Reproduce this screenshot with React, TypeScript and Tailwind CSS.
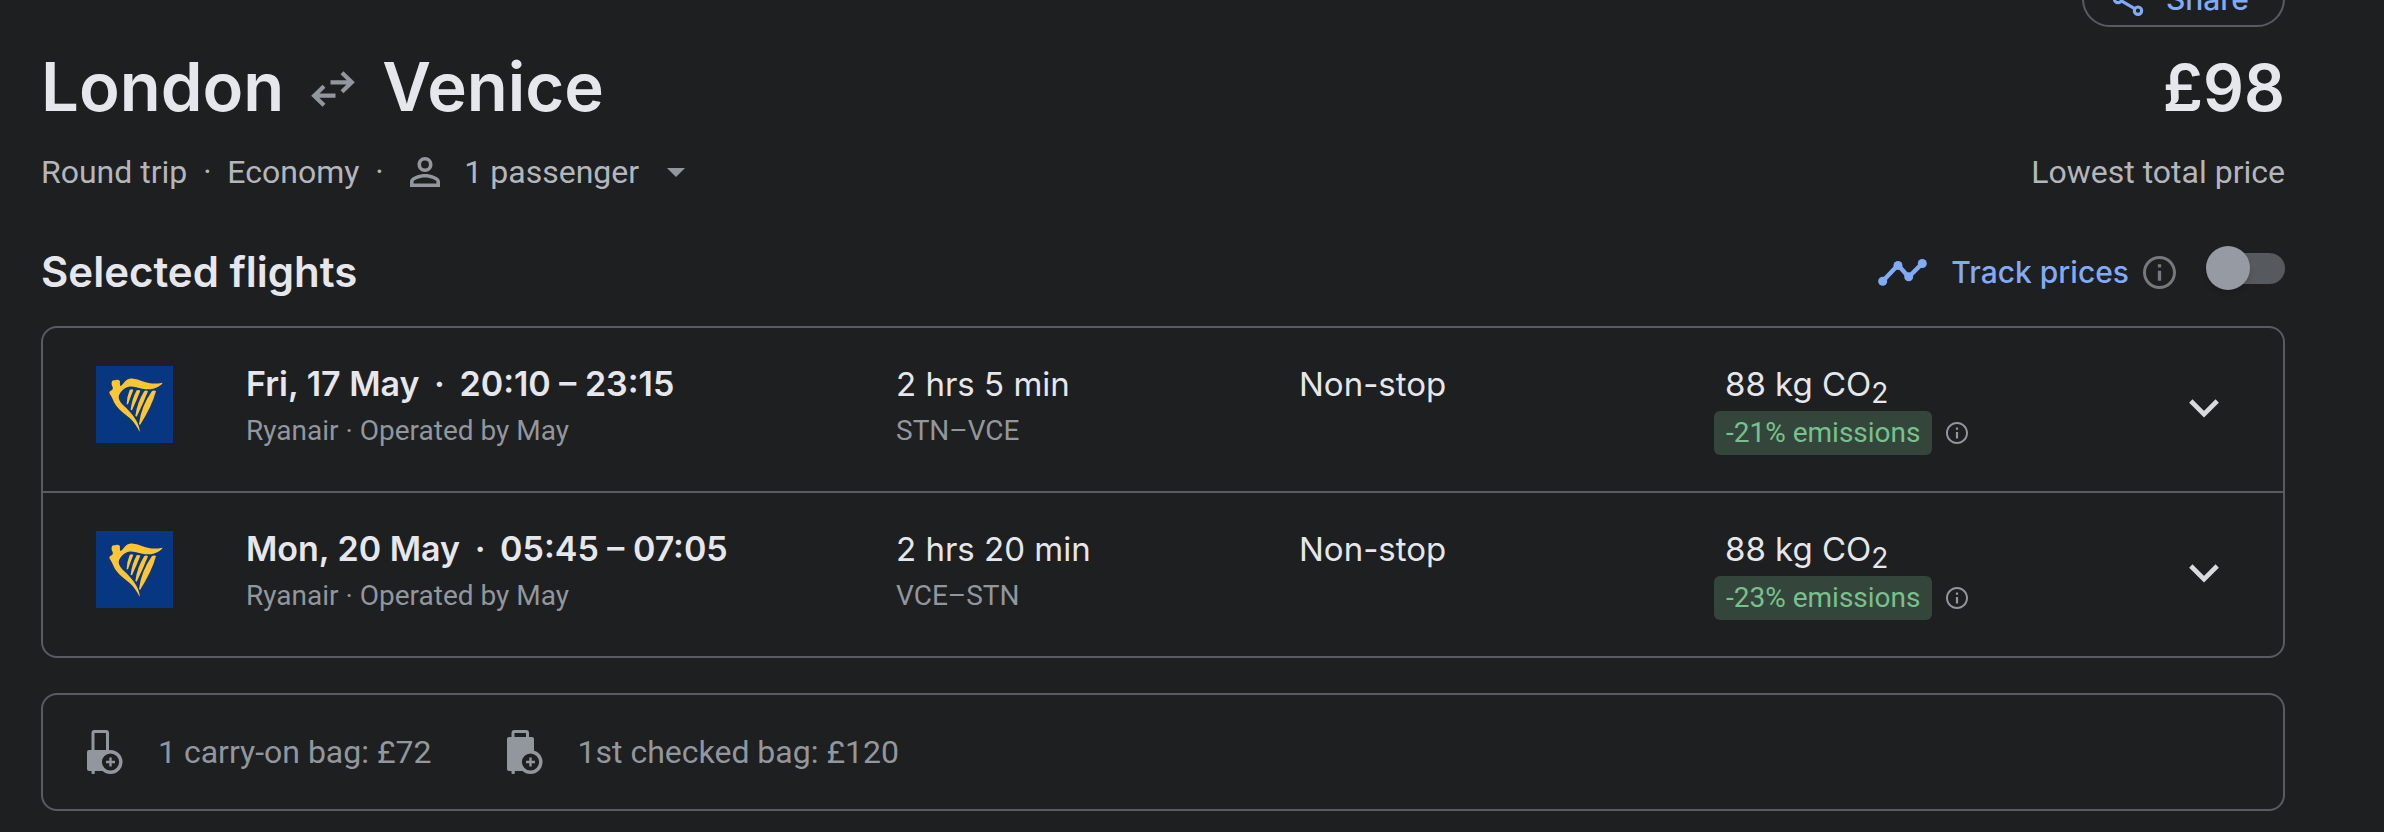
import React from "react";

type Flight = {
  date: string;
  time: string;
  carrier: string;
  duration: string;
  route: string;
  stops: string;
  co2: string;
  emissions: string;
};

const flights: Flight[] = [
  {
    date: "Fri, 17 May",
    time: "20:10 – 23:15",
    carrier: "Ryanair · Operated by May",
    duration: "2 hrs 5 min",
    route: "STN–VCE",
    stops: "Non-stop",
    co2: "88 kg CO",
    emissions: "-21% emissions",
  },
  {
    date: "Mon, 20 May",
    time: "05:45 – 07:05",
    carrier: "Ryanair · Operated by May",
    duration: "2 hrs 20 min",
    route: "VCE–STN",
    stops: "Non-stop",
    co2: "88 kg CO",
    emissions: "-23% emissions",
  },
];

function Dot() {
  return <span className="inline-block w-10 text-center">·</span>;
}

function ShareIcon() {
  return (
    <svg viewBox="0 0 24 24" className="size-10" fill="none" stroke="currentColor" strokeWidth="1.9" aria-hidden="true">
      <circle cx="18" cy="5" r="2.2" />
      <circle cx="6" cy="12" r="2.2" />
      <circle cx="18" cy="19" r="2.2" />
      <path d="M8 10.9 16 6.2M8 13.1l8 4.7" />
    </svg>
  );
}

function RoundTripIcon() {
  return (
    <svg viewBox="0 0 44 36" className="mt-1 h-9 w-11 text-[#92969d]" fill="none" stroke="currentColor" strokeWidth="4.2" aria-hidden="true">
      <path d="M19.5 11.3H41M31 1.8l9.8 9.5-9.8 9.500" />
      <path d="M24.5 24.7H3M13 15.200l-9.800 9.500 9.800 9.500" />
    </svg>
  );
}

function PersonIcon() {
  return (
    <svg viewBox="4 4 16 16" className="size-[30px] text-[#92969d]" fill="currentColor" aria-hidden="true">
      <path d="M12 5.900a2.100 2.100 0 1 1 0 4.200 2.100 2.100 0 0 1 0-4.200m0 9c2.970 0 6.100 1.460 6.100 2.100v1.100H5.900V17c0-.64 3.130-2.100 6.100-2.100M12 4C9.790 4 8 5.790 8 8s1.790 4 4 4 4-1.790 4-4-1.790-4-4-4zm0 9c-2.670 0-8 1.340-8 4v3h16v-3c0-2.660-5.330-4-8-4z" />
    </svg>
  );
}

function TimelineIcon() {
  return (
    <svg viewBox="0 0 49 27" className="h-[27px] w-[49px]" fill="currentColor" aria-hidden="true">
      <path d="M4.7 22.3 20 6l10.7 12L44.3 4.4" fill="none" stroke="currentColor" strokeWidth="4.4" />
      <circle cx="4.7" cy="22.3" r="4.5" />
      <circle cx="20" cy="6.4" r="4.5" />
      <circle cx="30.7" cy="17.8" r="4.5" />
      <circle cx="44.3" cy="4.5" r="4.5" />
    </svg>
  );
}

function InfoIcon({ className }: { className: string }) {
  return (
    <svg viewBox="2 2 20 20" className={className} fill="currentColor" aria-hidden="true">
      <path d="M11 7h2v2h-2zm0 4h2v6h-2zm1-9C6.480 2 2 6.480 2 12s4.480 10 10 10 10-4.480 10-10S17.520 2 12 2zm0 18.200c-4.520 0-8.200-3.680-8.200-8.200S7.480 3.800 12 3.800s8.200 3.680 8.200 8.200-3.680 8.200-8.200 8.200z" />
    </svg>
  );
}

function HarpLogo() {
  return (
    <svg viewBox="48 48 231 231" className="size-[77px]" role="img" aria-label="Ryanair">
      <rect x="48" y="48" width="231" height="231" fill="#073780" />
      <g fill="#ffc534">
        <path d="M96 94C99 89 104 92 108 90C113 88 119 90 120 95C119 100 120 105 121 108C126 107 129 102 133 97C139 88 149 84 160 86C178 88 192 97 210 100C224 102 236 100 248 98C245 105 238 107 233 111C219 119 203 119 187 116C172 113 158 108 146 110C132 113 122 124 117 136C114 147 121 157 129 165C144 179 160 195 169 212C175 223 180 236 179 246C171 230 162 216 149 204C136 193 120 183 110 169C101 157 98 145 93 137C88 131 86 126 91 123C97 121 100 117 98 111C94 106 94 98 96 94Z" />
        <path d="M149 120Q155 116 160 120Q151 142 144 163L140 163Q140 141 149 120Z" />
        <path d="M170 121Q176 118 181 122Q170 150 156 181L152 180Q155 149 170 121Z" />
        <path d="M193 123Q199 120 204 124Q190 160 170 200L166 198Q171 158 193 123Z" />
        <path d="M216 123Q222 120 228 123Q216 168 180 225L177 222Q183 170 216 123Z" />
      </g>
    </svg>
  );
}

function BagIcon({ checked }: { checked?: boolean }) {
  return (
    <svg viewBox="0 0 36 44" className="h-11 w-9 shrink-0" aria-hidden="true">
      <path
        d={checked ? "M6 9V3a1.5 1.5 0 0 1 1.5-1.5H19A1.5 1.5 0 0 1 20.5 3v6" : "M6 21.5V3a1.5 1.5 0 0 1 1.5-1.5H19A1.5 1.5 0 0 1 20.5 3v18.5"}
        fill="none"
        stroke="#92969d"
        strokeWidth="3"
      />
      <rect x="0" y={checked ? 7 : 20} width={checked ? 27 : 23} height={checked ? 34 : 21} rx="2" fill="#92969d" />
      <rect x="4.5" y="40" width="3.3" height="4" rx="1" fill="#92969d" />
      <circle cx="23.5" cy="32" r="10.3" fill="#1e1f21" stroke="#92969d" strokeWidth="3.4" />
      <path d="M23.5 27.5v9M19 32h9" stroke="#92969d" strokeWidth="2.4" />
    </svg>
  );
}

function FlightRow({ flight }: { flight: Flight }) {
  return (
    <li className="grid grid-cols-[203px_650fr_403fr_415fr_569fr] items-start pt-[34px] pb-9">
      <div className="pt-1 pl-[53px]">
        <HarpLogo />
      </div>
      <div className="flex flex-col gap-[5px]">
        <p className="font-['Inter',sans-serif] text-[34px] leading-[44px] font-semibold">
          {flight.date}
          <Dot />
          {flight.time}
        </p>
        <p className="text-[28px] leading-10 text-[#92969d]">{flight.carrier}</p>
      </div>
      <div className="flex flex-col gap-[5px]">
        <p className="font-['Inter',sans-serif] text-[33px] leading-[44px]">{flight.duration}</p>
        <p className="text-[28px] leading-10 text-[#92969d]">{flight.route}</p>
      </div>
      <p className="font-['Inter',sans-serif] text-[33px] leading-[44px]">{flight.stops}</p>
      <div className="flex items-center justify-between pr-16">
        <div className="flex flex-col gap-[5px]">
          <p className="pl-[11px] font-['Inter',sans-serif] text-[33px] leading-[44px]">
            {flight.co2}
            <sub className="text-[28px]">2</sub>
          </p>
          <div className="flex items-center gap-[14px]">
            <span className="rounded-md bg-[#34463b] px-3 text-[28px] leading-[44px] text-[#78c18d]">
              {flight.emissions}
            </span>
            <button type="button" aria-label="Emissions information" className="text-[#92969d]">
              <InfoIcon className="size-[22px]" />
            </button>
          </div>
        </div>
        <button type="button" aria-label="Flight details">
          <svg viewBox="0 0 30 19" className="h-[19px] w-[30px]" fill="none" stroke="#d9dade" strokeWidth="4.6" aria-hidden="true">
            <path d="M1.8 2 15 15.2 28.2 2" />
          </svg>
        </button>
      </div>
    </li>
  );
}

export default function App() {
  return (
    <main className="min-h-screen overflow-hidden bg-[#1e1f21] pr-[99px] pb-5 pl-[41px] font-['Roboto',sans-serif] text-[#e6e7ec]">
      <div className="-mt-[29px] flex justify-end">
        <button
          type="button"
          className="flex h-14 items-center gap-[18px] rounded-full border-2 border-[#5a5b61] pr-[34px] pl-6 font-['Inter',sans-serif] text-[30px] leading-10 font-medium text-[#82aaf5]"
        >
          <ShareIcon />
          Share
        </button>
      </div>

      <header className="mt-5 flex flex-col gap-6">
        <div className="flex items-baseline justify-between font-['Inter',sans-serif] leading-[80px] font-semibold">
          <h1 className="flex items-center gap-[27px] text-[67px]">
            London
            <RoundTripIcon />
            Venice
          </h1>
          <p className="text-[64px]">£98</p>
        </div>
        <div className="flex items-center justify-between text-[32px] leading-10 text-[#b4b6bc]">
          <div className="flex items-center">
            <span>Round trip</span>
            <Dot />
            <span>Economy</span>
            <Dot />
            <button type="button" className="ml-[11px] flex items-center gap-6">
              <PersonIcon />
              1 passenger
              <svg viewBox="0 0 18 9" className="ml-1 h-[9px] w-[18px]" fill="#92969d" aria-hidden="true">
                <path d="M0 0h18L9 9z" />
              </svg>
            </button>
          </div>
          <p>Lowest total price</p>
        </div>
      </header>

      <section className="mt-[54px]">
        <div className="flex items-center justify-between">
          <h2 className="font-['Inter',sans-serif] text-[42px] leading-[52px] font-semibold">Selected flights</h2>
          <div className="flex items-center self-stretch text-[#82aaf5]">
            <TimelineIcon />
            <label htmlFor="track-prices" className="ml-6 font-['Inter',sans-serif] text-[30px] leading-10 font-medium">
              Track prices
            </label>
            <button type="button" aria-label="About price tracking" className="ml-[14px] text-[#75797e]">
              <InfoIcon className="size-[33px]" />
            </button>
            <div className="relative ml-[30px] flex h-11 w-[79px] items-center justify-end self-start">
              <input
                id="track-prices"
                type="checkbox"
                role="switch"
                className="peer h-[31px] w-[72px] appearance-none rounded-full bg-[#56595e]"
              />
              <span className="pointer-events-none absolute top-0 left-0 size-11 rounded-full bg-[#969aa2] shadow-md transition-transform peer-checked:translate-x-9" />
            </div>
          </div>
        </div>

        <ul className="mt-7 divide-y-2 divide-[#5a5b61] rounded-2xl border-2 border-[#5a5b61]">
          {flights.map((flight) => (
            <FlightRow key={flight.route} flight={flight} />
          ))}
        </ul>
      </section>

      <ul className="mt-[35px] flex items-center gap-[75px] rounded-2xl border-2 border-[#5a5b61] px-11 py-[35px] text-[32px] leading-[44px] text-[#92969d]">
        <li className="flex items-center gap-[35px]">
          <BagIcon />
          1 carry-on bag: £72
        </li>
        <li className="flex items-center gap-[35px]">
          <BagIcon checked />
          1st checked bag: £120
        </li>
      </ul>
    </main>
  );
}
